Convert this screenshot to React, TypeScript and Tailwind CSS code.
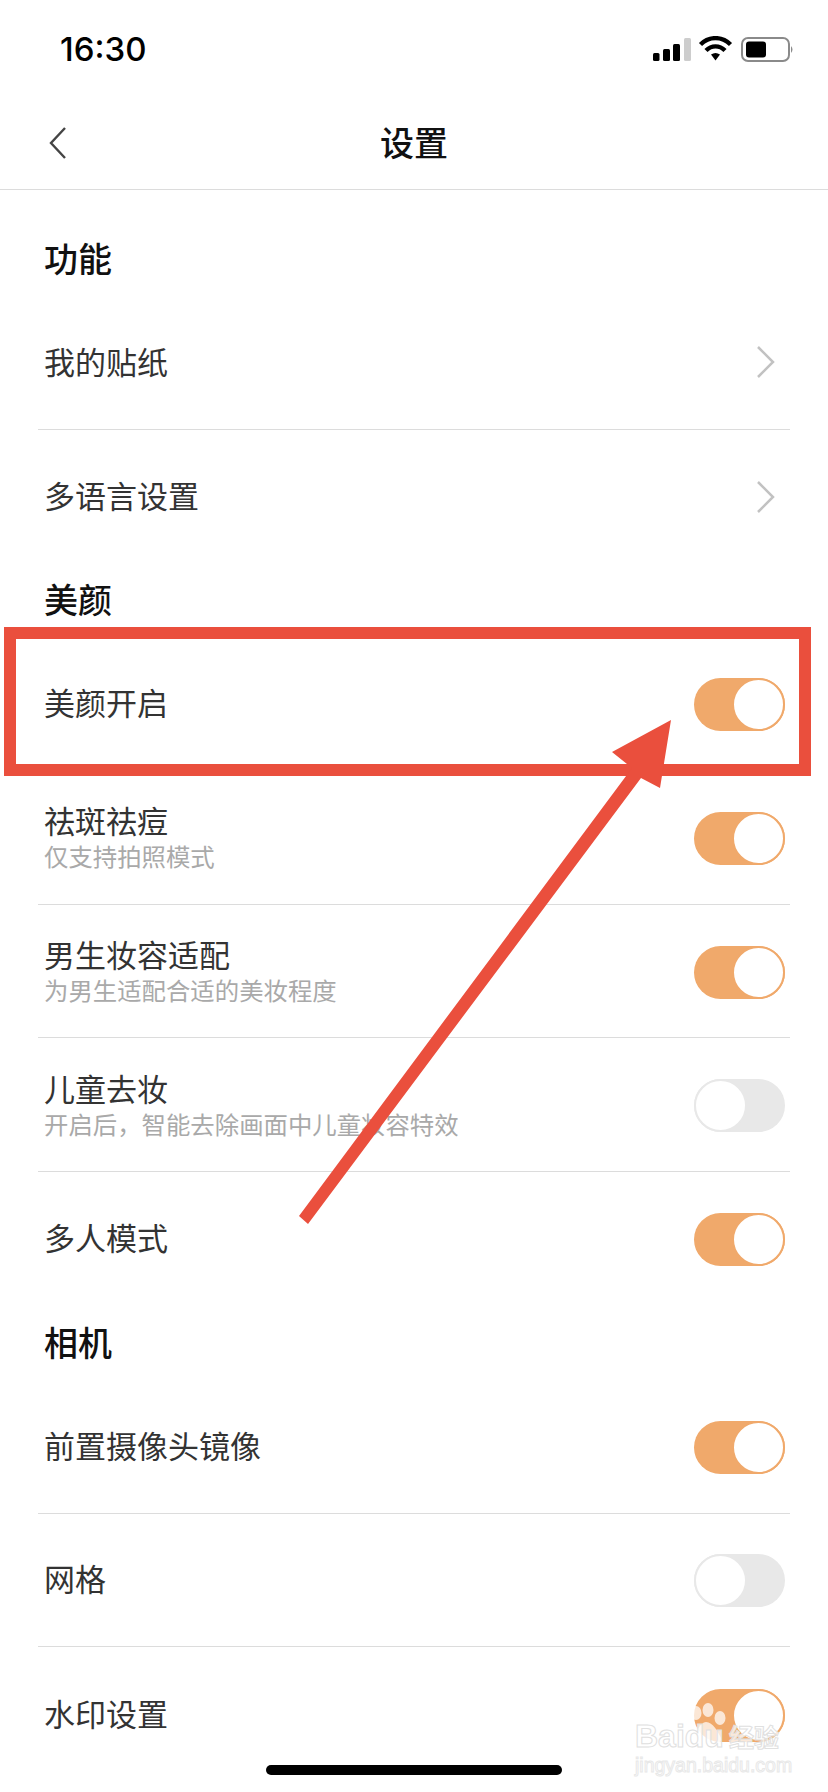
import React from "react";

const cjk = { fontFamily: '"Noto Sans CJK SC", "Liberation Sans", sans-serif' };

function Toggle({ on }: { on: boolean }) {
  return (
    <div
      className={`relative mt-[2px] h-[53px] w-[91px] shrink-0 rounded-full ${on ? "bg-[#f0a96b]" : "bg-[#e8e8e8]"}`}
    >
      <div
        className={`absolute top-0 h-[53px] w-[53px] rounded-full border-2 bg-white ${
          on ? "right-0 border-[#f0a96b]" : "left-0 border-[#e8e8e8]"
        }`}
      />
    </div>
  );
}

function Chevron() {
  return (
    <svg width="20" height="34" viewBox="0 0 20 34" fill="none" className="mr-[9px] shrink-0">
      <path d="M2 2 L17 17 L2 32" stroke="#c2c2c2" strokeWidth="2.5" />
    </svg>
  );
}

function Heading({ children, first }: { children: string; first?: boolean }) {
  return (
    <div
      className={`flex items-center pl-[6px] text-[34px] leading-none font-medium text-[#111] ${
        first ? "h-[106px] pb-[4px] pt-[34px]" : "h-[74px] pb-[2px]"
      }`}
    >
      {children}
    </div>
  );
}

function Row({
  title,
  sub,
  right,
  last,
}: {
  title: string;
  sub?: string;
  right: React.ReactNode;
  last?: boolean;
}) {
  return (
    <div
      className={`flex h-[133.7px] items-center justify-between pl-[6px] pr-[5px] ${
        last ? "" : "border-b border-[#dcdcdc]"
      }`}
    >
      <div className={`flex flex-col ${sub ? "pb-[3px]" : "pb-[3px]"}`}>
        <div className={`text-[31px] text-[#333] ${sub ? "leading-[36px]" : "leading-[38px]"}`}>{title}</div>
        {sub && <div className="mb-[-2px] mt-[3px] text-[24.4px] leading-[30px] text-[#a9a9a9]">{sub}</div>}
      </div>
      {right}
    </div>
  );
}

export default function App() {
  return (
    <div className="relative h-[1792px] w-[828px] overflow-hidden bg-white" style={cjk}>
      {/* status bar */}
      <div className="flex h-[98px] items-center justify-between pl-[60px] pr-[33px]">
        <span className="text-[33px] font-medium leading-none text-black [font-family:Inter,sans-serif]">
          16:30
        </span>
        <svg width="142" height="26" viewBox="653 36 142 26">
          <rect x="653" y="53" width="6.5" height="8" rx="1.5" fill="#000" />
          <rect x="663" y="49" width="7" height="12" rx="1.5" fill="#000" />
          <rect x="673" y="44" width="7" height="17" rx="1.5" fill="#000" />
          <rect x="684" y="38" width="7" height="23" rx="1.5" fill="#cdcdcd" />
          <path d="M700.5 44.5 C709 36 722 36 730.5 44.5" fill="none" stroke="#000" strokeWidth="4.4" />
          <path d="M706 50.5 C711.5 45 719.5 45 725 50.5" fill="none" stroke="#000" strokeWidth="4.4" />
          <path d="M711 54.5 Q715.5 51.5 720 54.5 L715.5 60.5 Z" fill="#000" />
          <rect x="742" y="38" width="47" height="23" rx="6" fill="none" stroke="#8a8a8a" strokeWidth="2" />
          <rect x="746" y="41.5" width="20" height="16" rx="3" fill="#000" />
          <path d="M791 46 Q794 49.5 791 53 Z" fill="#8a8a8a" />
        </svg>
      </div>

      {/* nav */}
      <div className="relative flex h-[92px] items-center justify-center border-b border-[#dcdcdc]">
        <svg
          width="18"
          height="34"
          viewBox="0 0 18 34"
          fill="none"
          className="absolute left-[49px] top-[28px]"
        >
          <path d="M16 2 L2 17 L16 32" stroke="#444" strokeWidth="2.4" />
        </svg>
        <span className="pb-[4px] text-[34px] font-medium leading-none text-[#111]">设置</span>
      </div>

      {/* list */}
      <div className="px-[38px]">
        <Heading first>功能</Heading>
        <Row title="我的贴纸" right={<Chevron />} />
        <Row title="多语言设置" right={<Chevron />} last />
        <Heading>美颜</Heading>
        <Row title="美颜开启" right={<Toggle on />} />
        <Row title="祛斑祛痘" sub="仅支持拍照模式" right={<Toggle on />} />
        <Row title="男生妆容适配" sub="为男生适配合适的美妆程度" right={<Toggle on />} />
        <Row title="儿童去妆" sub="开启后，智能去除画面中儿童妆容特效" right={<Toggle on={false} />} />
        <Row title="多人模式" right={<Toggle on />} last />
        <Heading>相机</Heading>
        <Row title="前置摄像头镜像" right={<Toggle on />} />
        <Row title="网格" right={<Toggle on={false} />} />
        <Row title="水印设置" right={<Toggle on />} last />
      </div>

      {/* red annotation box */}
      <div className="absolute left-[4px] top-[627px] h-[149px] w-[807px] border-[12px] border-[#ea4f3d]" />

      {/* red annotation arrow */}
      <svg width="828" height="1792" viewBox="0 0 828 1792" className="absolute left-0 top-0">
        <path
          d="M671 720 L612 752 L632 768 L299 1216 L308 1224 L641 778 L660 788 Z"
          fill="#ea4f3d"
        />
      </svg>

      {/* watermark */}
      <div className="absolute left-[635px] top-[1700px] w-[150px] [font-family:'Liberation_Sans',sans-serif]">
        <svg width="46" height="46" viewBox="0 0 46 46" className="absolute left-[50px] top-[2px]" fill="#fff" fillOpacity="0.72">
          <ellipse cx="11" cy="11" rx="5.5" ry="7" />
          <ellipse cx="23" cy="8" rx="5.5" ry="7" />
          <ellipse cx="35" cy="16" rx="5.5" ry="7" />
          <ellipse cx="3" cy="24" rx="4.5" ry="6" />
          <path d="M21 20 C28 20 33 30 36 36 C38 42 28 42 21 41 C14 42 6 42 9 34 C12 30 15 20 21 20 Z" />
        </svg>
        <div className="absolute left-0 top-[20px] flex items-center">
          <span className="text-[32px] font-bold leading-none text-white/75 [-webkit-text-stroke:1px_#e0e0e0]">
            Baidu
          </span>
          <span
            className="ml-[5px] text-[25px] font-bold leading-none text-white/75 [-webkit-text-stroke:1px_#e0e0e0]"
            style={cjk}
          >
            经验
          </span>
        </div>
        <div className="absolute left-0 top-[56px] text-[19.5px] leading-none text-white/75 [-webkit-text-stroke:1px_#e8e8e8]">
          jingyan.baidu.com
        </div>
      </div>

      {/* home indicator */}
      <div className="absolute bottom-[17px] left-[266px] h-[10px] w-[296px] rounded-full bg-black" />
    </div>
  );
}
